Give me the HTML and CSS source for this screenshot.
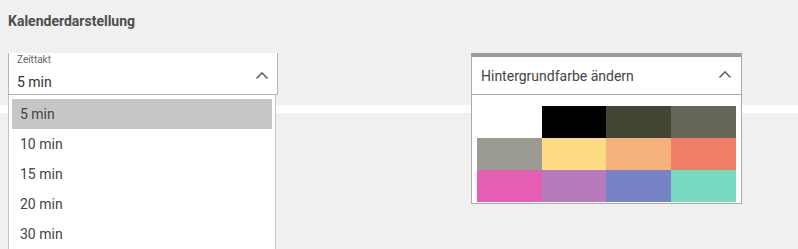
FILE: index.html
```html
<!DOCTYPE html>
<html lang="de">
<head>
<meta charset="utf-8">
<title>Kalenderdarstellung</title>
<link rel="stylesheet" href="styles.css">
</head>
<body>
<div class="page">
  <h2 class="title">Kalenderdarstellung</h2>
  <div class="fields">
    <div class="field field-time">
      <div class="select">
        <div class="select-text">
          <span class="label">Zeittakt</span>
          <span class="value">5 min</span>
        </div>
        <svg class="chevron" width="14" height="9" viewBox="0 0 14 9"><path d="M1.5 7.5 L7 2 L12.5 7.5" fill="none" stroke="#666" stroke-width="1.6"/></svg>
      </div>
      <ul class="menu">
        <li class="item active">5 min</li>
        <li class="item">10 min</li>
        <li class="item">15 min</li>
        <li class="item">20 min</li>
        <li class="item">30 min</li>
      </ul>
    </div>
    <div class="field field-color">
      <div class="select select-color">
        <span class="value">Hintergrundfarbe ändern</span>
        <svg class="chevron" width="14" height="9" viewBox="0 0 14 9"><path d="M1.5 7.5 L7 2 L12.5 7.5" fill="none" stroke="#666" stroke-width="1.6"/></svg>
      </div>
      <div class="palette">
        <span class="sw" style="background:#ffffff"></span>
        <span class="sw" style="background:#000000"></span>
        <span class="sw" style="background:#444635"></span>
        <span class="sw" style="background:#65675a"></span>
        <span class="sw" style="background:#9b9b93"></span>
        <span class="sw" style="background:#fddb83"></span>
        <span class="sw" style="background:#f5b27a"></span>
        <span class="sw" style="background:#f07e67"></span>
        <span class="sw" style="background:#e45fb4"></span>
        <span class="sw" style="background:#b77abc"></span>
        <span class="sw" style="background:#7683c6"></span>
        <span class="sw" style="background:#76d9c1"></span>
      </div>
    </div>
  </div>
  <div class="band"></div>
</div>
</body>
</html>
```
FILE: styles.css
```css
html, body {
  margin: 0;
  padding: 0;
  background: #f0f0f0;
  font-family: Roboto, "Liberation Sans", sans-serif;
  overflow: hidden;
}
.page {
  width: 798px;
  height: 249px;
}
.title {
  margin: 0;
  padding: 13px 0 0 8px;
  height: 40px;
  font-size: 14px;
  font-weight: 700;
  color: #4d4d4d;
  line-height: 16px;
}
.fields {
  display: flex;
  padding-left: 8px;
  gap: 193px;
  height: 42px;
}
.field {
  position: relative;
}
.field-time { width: 270px; }
.field-color { width: 271px; }
.select {
  box-sizing: border-box;
  height: 42px;
  background: #fff;
  border: 1px solid #b4b4b4;
  border-top: none;
  display: flex;
  align-items: center;
  justify-content: space-between;
  padding: 0 8px 0 8px;
}
.select-text {
  display: flex;
  flex-direction: column;
  align-self: flex-start;
}
.label {
  font-size: 10px;
  color: #666;
  line-height: 12px;
  margin-top: 1px;
}
.value {
  font-size: 14px;
  color: #333;
  line-height: 18px;
  margin-top: 7px;
}
.chevron {
  margin-top: 4px;
}
.select-color {
  border-color: #aaaaaa;
  border-top: 4px solid #9d9d96;
  padding-left: 9px;
  padding-right: 9px;
}
.select-color .value {
  margin-top: 0;
  color: #444;
}
.select-color .chevron {
  margin-top: -3px;
}
.menu {
  position: absolute;
  left: 0;
  top: 42px;
  width: 268px;
  box-sizing: border-box;
  margin: 0;
  padding: 4px 3px 20px 3px;
  list-style: none;
  background: #fff;
  border-left: 1px solid #c4c4c4;
  border-right: 1px solid #c4c4c4;
  z-index: 2;
}
.item {
  height: 30px;
  line-height: 30px;
  padding-left: 8px;
  font-size: 14px;
  color: #444;
}
.item.active {
  background: #c6c6c6;
}
.palette {
  position: absolute;
  left: 0;
  top: 42px;
  width: 271px;
  box-sizing: border-box;
  background: #fff;
  border: 1px solid #aaaaaa;
  border-top: none;
  padding: 11px 5px 1px 5px;
  display: grid;
  grid-template-columns: 65px 64px 65px 65px;
  grid-auto-rows: 32px;
  z-index: 2;
}
.band {
  margin-top: 10px;
  height: 8px;
  background: #fff;
}
```
